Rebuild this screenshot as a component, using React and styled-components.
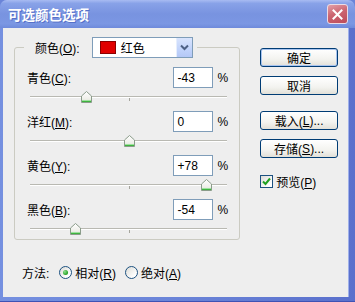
import React from 'react'
import styled, { createGlobalStyle } from 'styled-components'

const GlobalStyle = createGlobalStyle`
  html, body {
    margin: 0;
    padding: 0;
    background: #6a84d8;
  }
  body {
    font-family: "Liberation Sans", "Noto Sans CJK SC", sans-serif;
    font-size: 12px;
    color: #000;
  }
`

const Frame = styled.div`
  width: 355px;
  height: 302px;
  box-sizing: border-box;
  display: flex;
  flex-direction: column;
  padding: 0 6px 4px 3px;
  background: linear-gradient(90deg, #7590e0 0%, #6a84d8 50%, #5a70cc 100%);
  border-bottom: 1px solid #3f52b4;
  border-radius: 7px 7px 0 0;
  overflow: hidden;
`

const TitleBar = styled.div`
  height: 28px;
  margin: 0 -6px 0 -3px;
  padding: 0 7px 0 8px;
  display: flex;
  align-items: center;
  justify-content: space-between;
  background: linear-gradient(180deg, #a8bbf2 0%, #88a2e8 12%, #7893e0 50%, #7b97e3 85%, #6e8adb 100%);
`

const Title = styled.span`
  color: #fff;
  font-family: "Noto Sans CJK SC", sans-serif;
  font-weight: bold;
  font-size: 13.5px;
  text-shadow: 1px 1px 0 #5570c8;
`

const CloseButton = styled.div`
  width: 19px;
  height: 18px;
  display: flex;
  align-items: center;
  justify-content: center;
  border: 1px solid #eadce6;
  border-radius: 3px;
  background: linear-gradient(160deg, #e3a0a8 0%, #cc6672 45%, #bd4c5a 100%);
`

const Client = styled.div`
  flex: 1;
  display: flex;
  gap: 20px;
  padding: 9px 10px 0 11px;
  background: #eeeeee;
  border-right: 1px solid #9fb0ea;
`

const LeftCol = styled.div`
  width: 227px;
  display: flex;
  flex-direction: column;
`

const Group = styled.fieldset`
  margin: 0;
  padding: 9px 11px 1px 12px;
  border: 1px solid #cbcbc2;
  border-radius: 3px;
  min-width: 0;
  display: flex;
  flex-direction: column;
  gap: 5px;
`

const Legend = styled.legend`
  margin-left: -3px;
  padding: 0 4px 0 11px;
  display: flex;
  align-items: center;
  gap: 12px;
`

const Select = styled.div`
  width: 101px;
  height: 21px;
  box-sizing: border-box;
  display: flex;
  align-items: center;
  padding-left: 7px;
  border: 1px solid #7f9db9;
  background: #fff;
`

const Swatch = styled.span`
  width: 16px;
  height: 13px;
  box-sizing: border-box;
  margin-right: 5px;
  background: ${p => p.$color};
  border: 1px solid #8a0000;
`

const SelectArrow = styled.span`
  margin-left: auto;
  width: 15px;
  height: 19px;
  display: flex;
  align-items: center;
  justify-content: center;
  background: linear-gradient(180deg, #d9e4fd 0%, #c1d3fb 60%, #b4c8f6 100%);
  border-left: 1px solid #e6eefd;
`

const Row = styled.div`
  display: flex;
  flex-direction: column;
`

const RowHead = styled.div`
  height: 21px;
  display: flex;
  align-items: center;
`

const Label = styled.span`
  flex: 1;
`

const ValueBox = styled.div`
  width: 40px;
  height: 21px;
  box-sizing: border-box;
  display: flex;
  align-items: center;
  padding-left: 4px;
  border: 1px solid #7f9db9;
  background: #fff;
`

const Percent = styled.span`
  margin-left: 5px;
`

const SliderArea = styled.div`
  position: relative;
  height: 18px;
  margin: 0 1px 0 3px;
`

const Track = styled.div`
  position: absolute;
  left: 0;
  right: 0;
  top: 8px;
  height: 1px;
  background: #b9b9b2;
  border-bottom: 1px solid #fff;
`

const Tick = styled.div`
  position: absolute;
  left: 50%;
  top: 10px;
  width: 1px;
  height: 3px;
  background: #a5a59d;
`

const Thumb = styled.svg`
  position: absolute;
  top: 3px;
  width: 11px;
  height: 12px;
  margin-left: -5px;
`

const MethodRow = styled.div`
  margin-top: 24px;
  padding-left: 8px;
  height: 16px;
  display: flex;
  align-items: center;
`

const MethodLabel = styled.span`
  margin-right: 10px;
`

const Choice = styled.span`
  display: flex;
  align-items: center;
  gap: 3px;
  margin-right: 9px;
`

const Radio = styled.span`
  width: 13px;
  height: 13px;
  box-sizing: border-box;
  border-radius: 50%;
  border: 1px solid #1c5180;
  background: linear-gradient(135deg, #dcdcd7 0%, #fff 80%);
  display: flex;
  align-items: center;
  justify-content: center;

  &::after {
    content: '';
    display: ${p => (p.$checked ? 'block' : 'none')};
    width: 5px;
    height: 5px;
    border-radius: 50%;
    background: radial-gradient(circle at 35% 35%, #8ee08e 0%, #21a121 70%);
  }
`

const RightCol = styled.div`
  width: 78px;
  padding-top: 11px;
  display: flex;
  flex-direction: column;
`

const ButtonStack = styled.div`
  display: flex;
  flex-direction: column;
  gap: 9px;
  margin-top: ${p => p.$gap || 0}px;
`

const Button = styled.div`
  height: 19px;
  box-sizing: border-box;
  display: flex;
  align-items: center;
  justify-content: center;
  border: 1px solid #003c74;
  border-radius: 3px;
  background: linear-gradient(180deg, #ffffff 0%, #f3f3ef 60%, #e2e0d8 100%);
  box-shadow: ${p => (p.$default ? 'inset 0 0 0 1px #a8c4f0' : 'none')};
`

const CheckRow = styled.div`
  margin-top: 15px;
  display: flex;
  align-items: center;
  gap: 3px;
`

const CheckBox = styled.span`
  width: 13px;
  height: 13px;
  box-sizing: border-box;
  border: 1px solid #1c5180;
  background: linear-gradient(135deg, #dcdcd7 0%, #fff 80%);
  display: flex;
  align-items: center;
  justify-content: center;
`

const sliders = [
  { name: '青色', key: 'C', value: -43 },
  { name: '洋红', key: 'M', value: 0 },
  { name: '黄色', key: 'Y', value: 78 },
  { name: '黑色', key: 'B', value: -54 },
]

function formatValue(v) {
  if (v > 0) return '+' + v
  return String(v)
}

function SliderThumb({ value }) {
  const pct = (value + 100) / 2
  return (
    <Thumb viewBox="0 0 11 12" style={{ left: pct + '%' }}>
      <defs>
        <linearGradient id="thumbFill" x1="0" y1="0" x2="0" y2="1">
          <stop offset="0" stopColor="#ffffff" />
          <stop offset="0.7" stopColor="#eeeee8" />
          <stop offset="1" stopColor="#bfe8bf" />
        </linearGradient>
      </defs>
      <path d="M0.5 5 L5.5 0.5 L10.5 5 L10.5 11.5 L0.5 11.5 Z" fill="url(#thumbFill)" stroke="#8a9c8a" />
      <path d="M1 10.5 L10 10.5" stroke="#3fb43f" strokeWidth="1.2" />
      <path d="M1 9.5 L10 9.5" stroke="#9ee09e" strokeWidth="1" />
    </Thumb>
  )
}

function Slider({ name, hotkey, value }) {
  return (
    <Row>
      <RowHead>
        <Label>{name}(<u>{hotkey}</u>):</Label>
        <ValueBox>{formatValue(value)}</ValueBox>
        <Percent>%</Percent>
      </RowHead>
      <SliderArea>
        <Track />
        <Tick />
        <SliderThumb value={value} />
      </SliderArea>
    </Row>
  )
}

export default function App() {
  return (
    <>
      <GlobalStyle />
      <Frame>
        <TitleBar>
          <Title>可选颜色选项</Title>
          <CloseButton>
            <svg width="11" height="11" viewBox="0 0 11 11">
              <path d="M1.5 1.5 L9.5 9.5 M9.5 1.5 L1.5 9.5" stroke="#fff" strokeWidth="2" strokeLinecap="square" />
            </svg>
          </CloseButton>
        </TitleBar>
        <Client>
          <LeftCol>
            <Group>
              <Legend>
                <span>颜色(<u>O</u>):</span>
                <Select>
                  <Swatch $color="#e00000" />
                  <span>红色</span>
                  <SelectArrow>
                    <svg width="9" height="7" viewBox="0 0 9 7">
                      <path d="M1 1.5 L4.5 5 L8 1.5" fill="none" stroke="#4d6185" strokeWidth="2" />
                    </svg>
                  </SelectArrow>
                </Select>
              </Legend>
              {sliders.map(s => (
                <Slider key={s.key} name={s.name} hotkey={s.key} value={s.value} />
              ))}
            </Group>
            <MethodRow>
              <MethodLabel>方法:</MethodLabel>
              <Choice>
                <Radio $checked />
                <span>相对(<u>R</u>)</span>
              </Choice>
              <Choice>
                <Radio />
                <span>绝对(<u>A</u>)</span>
              </Choice>
            </MethodRow>
          </LeftCol>
          <RightCol>
            <ButtonStack>
              <Button $default>确定</Button>
              <Button>取消</Button>
            </ButtonStack>
            <ButtonStack $gap={16}>
              <Button>载入(<u>L</u>)...</Button>
              <Button>存储(<u>S</u>)...</Button>
            </ButtonStack>
            <CheckRow>
              <CheckBox>
                <svg width="9" height="9" viewBox="0 0 9 9">
                  <path d="M1 4.5 L3.5 7 L8 1.5" fill="none" stroke="#21a121" strokeWidth="2" />
                </svg>
              </CheckBox>
              <span>预览(<u>P</u>)</span>
            </CheckRow>
          </RightCol>
        </Client>
      </Frame>
    </>
  )
}
